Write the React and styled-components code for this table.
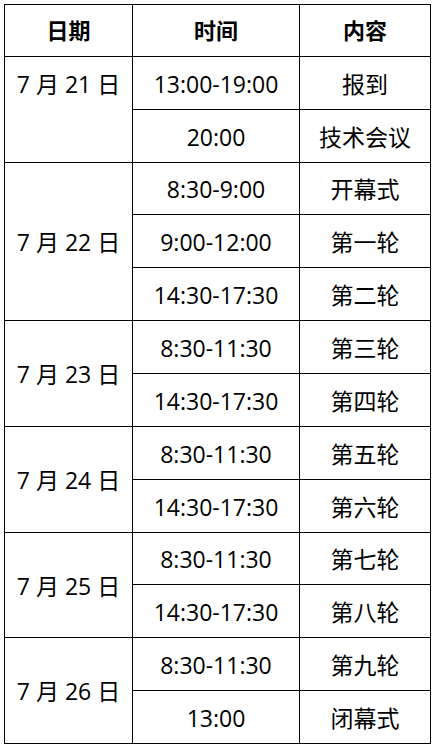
import React from "react";
import styled, { createGlobalStyle } from "styled-components";

const schedule = [
  { date: "7 月 21 日", top: true, items: [["13:00-19:00", "报到"], ["20:00", "技术会议"]] },
  {
    date: "7 月 22 日",
    items: [
      ["8:30-9:00", "开幕式"],
      ["9:00-12:00", "第一轮"],
      ["14:30-17:30", "第二轮"],
    ],
  },
  { date: "7 月 23 日", items: [["8:30-11:30", "第三轮"], ["14:30-17:30", "第四轮"]] },
  { date: "7 月 24 日", items: [["8:30-11:30", "第五轮"], ["14:30-17:30", "第六轮"]] },
  { date: "7 月 25 日", items: [["8:30-11:30", "第七轮"], ["14:30-17:30", "第八轮"]] },
  { date: "7 月 26 日", items: [["8:30-11:30", "第九轮"], ["13:00", "闭幕式"]] },
];

const GlobalStyle = createGlobalStyle`
  html, body {
    margin: 0;
    padding: 0;
    background: #fff;
  }
  body {
    font-family: "Open Sans", "Noto Sans CJK SC", sans-serif;
    color: #000;
  }
`;

const Page = styled.div`
  padding: 4px 4px 0 4px;
`;

const Table = styled.table`
  width: 423px;
  border-collapse: collapse;
  table-layout: fixed;
  border: 1px solid #000;
`;

const Row = styled.tr`
  height: ${(p) => (p.$short ? 52 : 53)}px;
`;

const HeadCell = styled.th`
  border: 1px solid #000;
  padding: 0;
  font-size: 22px;
  font-weight: 700;
  line-height: 1.2;
  text-align: center;
  vertical-align: middle;
  width: ${(p) => p.$w}px;
`;

const Cell = styled.td`
  border: 1px solid #000;
  padding: 3px 0 0;
  font-size: 23px;
  font-weight: 400;
  line-height: 1.2;
  text-align: center;
  vertical-align: middle;
  white-space: nowrap;
`;

const DateCell = styled(Cell)`
  vertical-align: ${(p) => (p.$top ? "top" : "middle")};
  padding-top: ${(p) => (p.$top ? 14 : 3)}px;
`;

const shortRows = new Set([3, 10]);

export default function App() {
  let index = 0;
  return (
    <>
      <GlobalStyle />
      <Page>
        <Table>
          <thead>
            <Row $short>
              <HeadCell $w={127}>日期</HeadCell>
              <HeadCell $w={166}>时间</HeadCell>
              <HeadCell $w={130}>内容</HeadCell>
            </Row>
          </thead>
          <tbody>
            {schedule.map((day) =>
              day.items.map(([time, what], i) => {
                index += 1;
                return (
                  <Row key={day.date + i} $short={shortRows.has(index)}>
                    {i === 0 && (
                      <DateCell rowSpan={day.items.length} $top={day.top}>
                        {day.date}
                      </DateCell>
                    )}
                    <Cell>{time}</Cell>
                    <Cell>{what}</Cell>
                  </Row>
                );
              })
            )}
          </tbody>
        </Table>
      </Page>
    </>
  );
}
